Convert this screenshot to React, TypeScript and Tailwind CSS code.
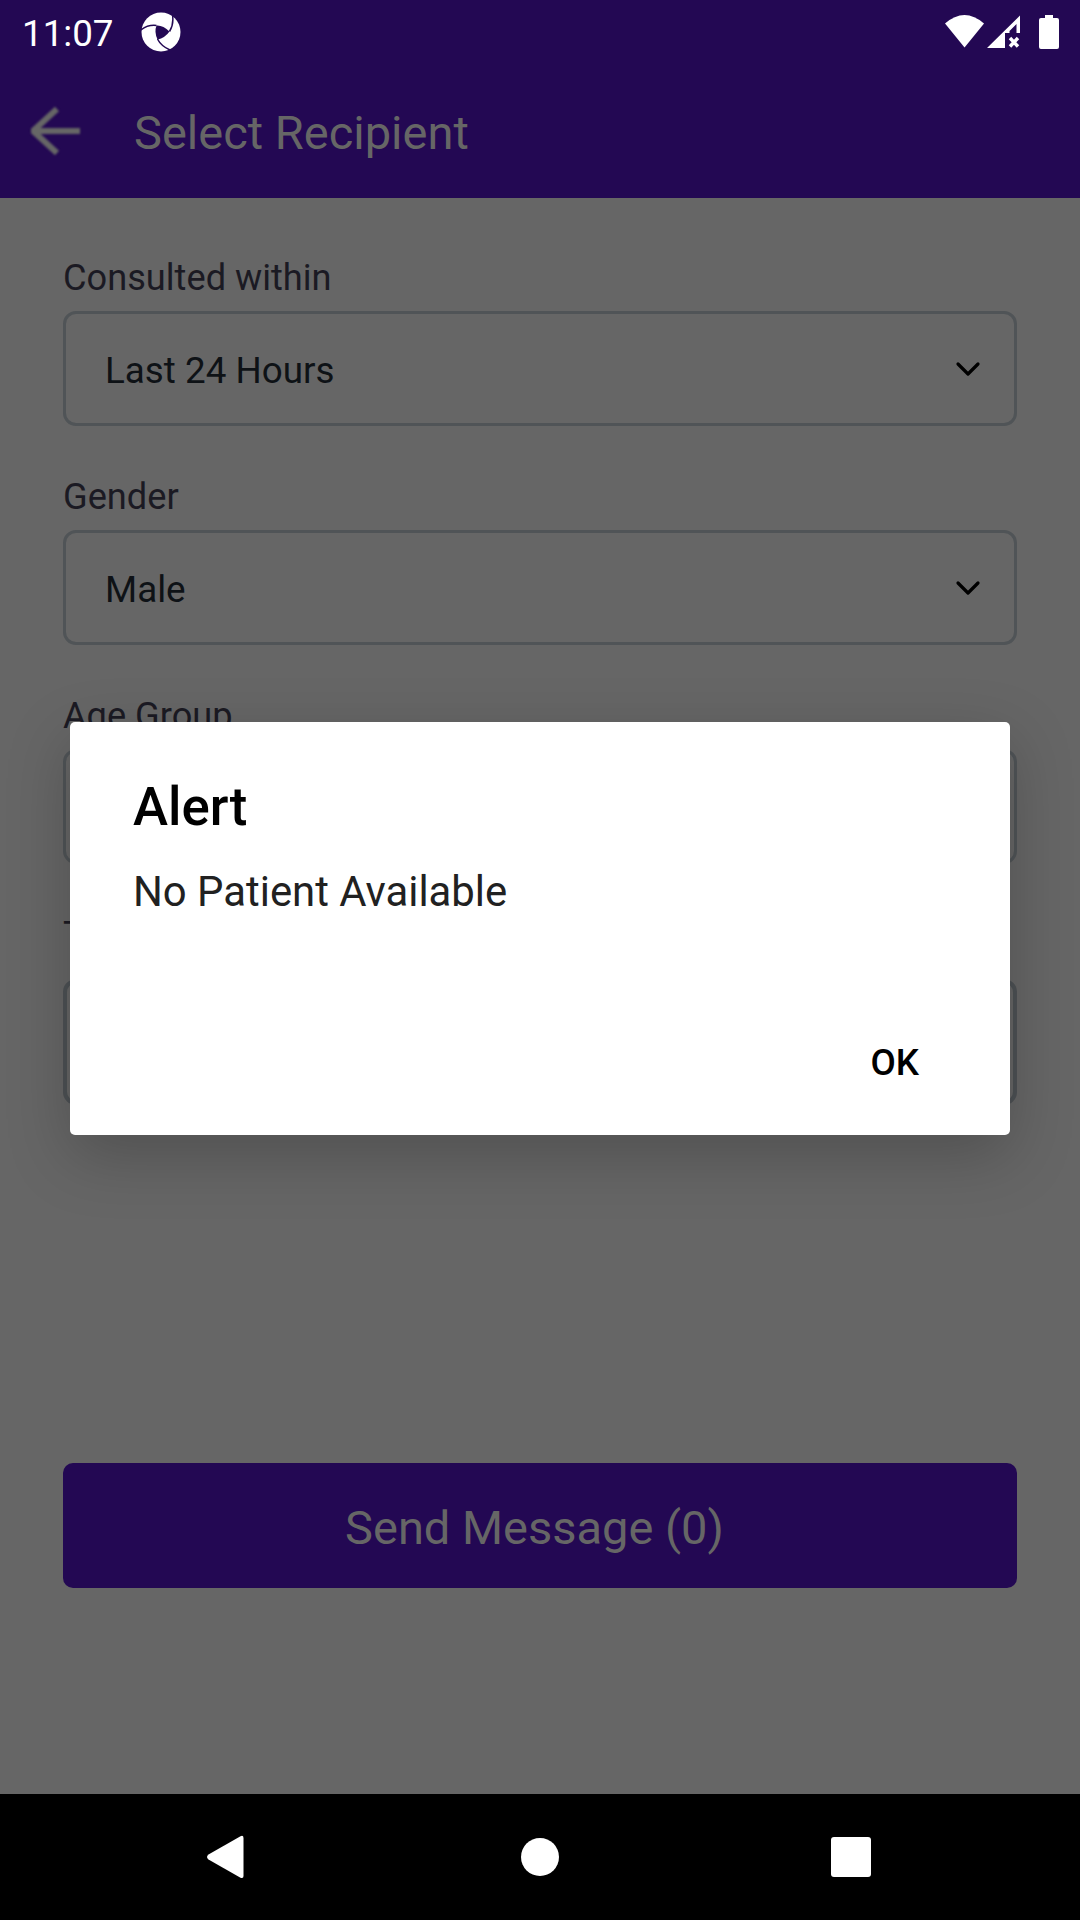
const SelectField = ({ label, value }: { label: string; value?: string }) => (
  <div className="mb-[30px]">
    <div className="flex h-[74px] items-center whitespace-nowrap pt-[8px] text-[36.2px] leading-[44px] text-[#1b1a23]">
      {label}
    </div>
    <div className="flex h-[115px] items-center justify-between rounded-[13px] border-[3px] border-[#505457] pl-[39px] pr-[33px]">
      <span className="pt-[4px] text-[36.8px] leading-[44px] text-[#0e1216]">{value}</span>
      <svg className="h-[16px] w-[26px]" viewBox="0 0 26 16" fill="none" stroke="#000" strokeWidth="3.2" strokeLinecap="round" strokeLinejoin="round">
        <path d="M3 3L13 13L23 3" />
      </svg>
    </div>
  </div>
);

const StatusBar = () => (
  <div className="flex h-[63px] items-center justify-between pl-[22px] pr-[20px] text-white">
    <div className="flex items-center">
      <span className="w-[119px] pt-[4px] text-[36.75px] leading-[44px]">11:07</span>
      <svg className="h-[40px] w-[40px]" viewBox="0 0 40 40">
        <circle cx="20" cy="20" r="19.5" fill="#fff" />
        <path d="M15.5 13.5Q22 13 28.5 19.5Q24 26 16.5 27.5Q13 20 15.5 13.5Z" fill="#230853" />
        <path d="M0 18Q7 12.5 15.5 13.5M31.5 3Q33 12 28.5 19.5M29 38Q20 34 16.5 27" fill="none" stroke="#230853" strokeWidth="1.5" />
      </svg>
    </div>
    <svg className="h-[36px] w-[116px]" viewBox="944 13 116 36" fill="#fff">
      <path d="M945 22.5Q964.5 5.5 984 22.5L964.5 46.5Z" />
      <path d="M1020 14.5V32H1016.5V23L1009.5 30V32H1005V47H987Z" />
      <path d="M1010 37L1018 45.5M1018 37L1010 45.5" stroke="#fff" strokeWidth="3.4" />
      <path d="M1045 14H1053V17H1057Q1059 17 1059 19V46Q1059 48 1057 48H1041Q1039 48 1039 46V19Q1039 17 1041 17H1045Z" />
    </svg>
  </div>
);

export default function App() {
  return (
    <div className="relative flex h-[1920px] w-[1080px] flex-col overflow-hidden bg-[#666666] font-['Roboto',sans-serif]">
      <header className="h-[198px] bg-[#230853]">
        <StatusBar />
        <div className="flex h-[135px] items-center pl-[28px]">
          <svg className="h-[50px] w-[53px] blur-[0.8px]" viewBox="0 0 53 50" fill="none" stroke="#666" strokeWidth="6" strokeLinejoin="bevel">
            <path d="M29 3L5 25L29 47M4 25H52" />
          </svg>
          <h1 className="ml-[53px] pt-[5px] text-[47px] leading-[56px] text-[#666666]">Select Recipient</h1>
        </div>
      </header>

      <main className="flex flex-1 flex-col px-[63px] pt-[39px]">
        <SelectField label="Consulted within" value="Last 24 Hours" />
        <SelectField label="Gender" value="Male" />
        <SelectField label="Age Group" />
        <div className="mt-[11px] flex h-[60px] items-center text-[36.2px] text-[#1b1a23]">Template</div>
        <div className="mt-[14px] h-[126px] rounded-[13px] border-4 border-[#4d5154]" />
        <button className="mt-[358px] flex h-[125px] items-center justify-center rounded-[10px] bg-[#230853] pr-[11px] pt-[6px] text-[47px] text-[#666666]">
          Send Message (0)
        </button>
      </main>

      <nav className="flex h-[126px] items-center bg-black pl-[206px]">
        <svg className="h-[44px] w-[38px]" viewBox="0 0 38 44" fill="#fff">
          <path d="M34.5 1.2Q37.5 0 37.5 3V41Q37.5 44 34.5 42.7L2.5 24.5Q-.5 22 2.5 19.5Z" />
        </svg>
        <div className="ml-[277px] h-[38px] w-[38px] rounded-full bg-white" />
        <div className="ml-[272px] h-[40px] w-[40px] rounded-[3px] bg-white" />
      </nav>

      <div role="dialog" className="absolute left-[70px] top-[722px] flex h-[413px] w-[940px] flex-col rounded-[5px] bg-white px-[63px] shadow-[0_20px_64px_rgba(0,0,0,0.22)]">
        <h2 className="mt-[55px] text-[52.8px] font-medium leading-[60px] text-black">Alert</h2>
        <p className="mt-[30px] text-[41.85px] leading-[50px] text-[#212121]">No Patient Available</p>
        <button className="mr-[28px] mt-[121px] self-end text-[36.75px] font-medium leading-[50px] text-black">OK</button>
      </div>
    </div>
  );
}
